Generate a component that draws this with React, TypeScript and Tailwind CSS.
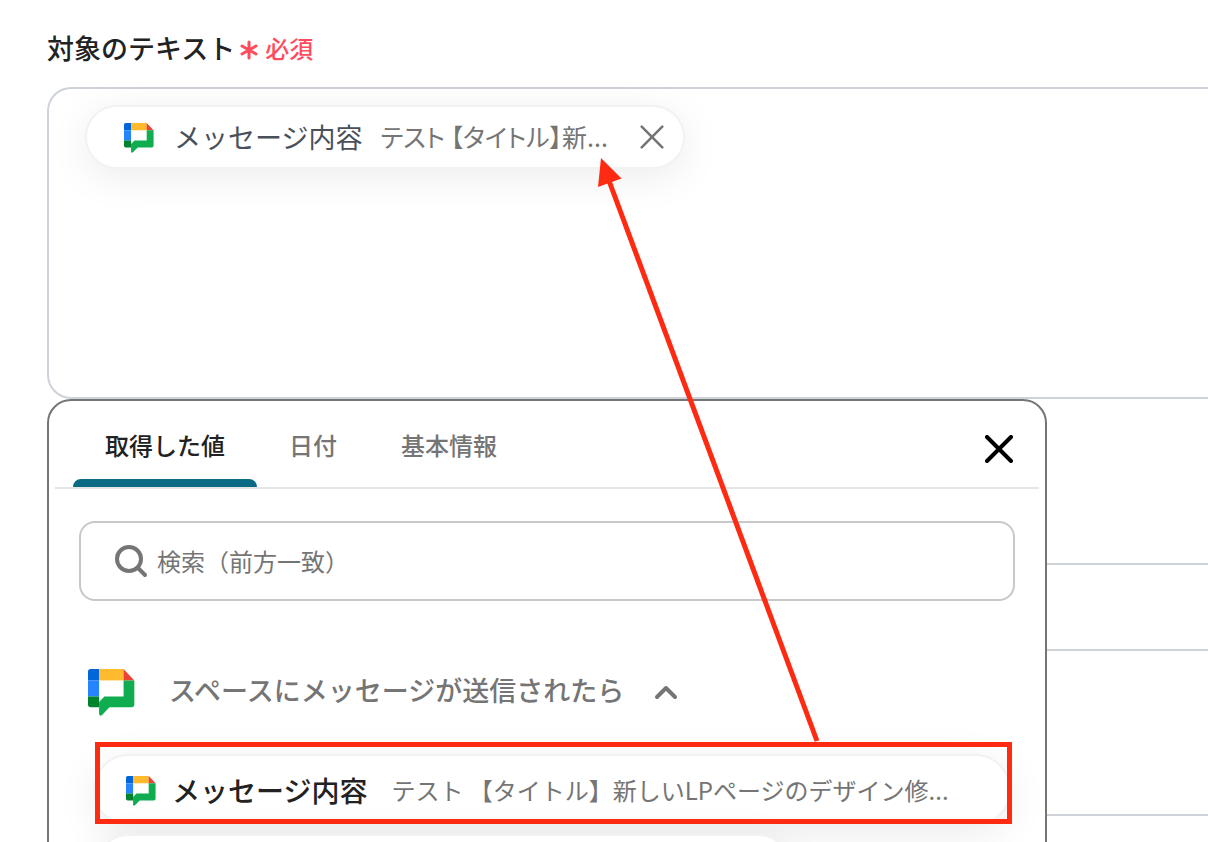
import { useState } from "react";

const tabs = ["取得した値", "日付", "基本情報"];

function ChatLogo({ className }: { className: string }) {
  return (
    <svg viewBox="0 0 140 140" className={className} aria-hidden>
      <path d="M8 0H33V34H0V8Q0 0 8 0Z" fill="#0066da" />
      <path d="M0 34H33V82H0Z" fill="#2684fc" />
      <path d="M0 82H33V114H8Q0 114 0 106Z" fill="#00832d" />
      <path d="M33 0H106V34H33Z" fill="#ffba2d" />
      <path d="M106 0L138 34H106Z" fill="#ea4335" />
      <path d="M106 34H138V106Q138 114 130 114H64L42 137Q33 143 33 132V98L49 82H106Z" fill="#0fac50" />
    </svg>
  );
}

function Cross({ className, strokeWidth }: { className: string; strokeWidth: number }) {
  return (
    <svg viewBox="0 0 28 28" fill="none" stroke="currentColor" strokeWidth={strokeWidth} strokeLinecap="round" className={className} aria-hidden>
      <path d="M2 2L26 26M26 2L2 26" />
    </svg>
  );
}

function RequiredMark() {
  return (
    <span className="flex items-center gap-[6px] text-2xl leading-10 font-medium text-[#ff4b5c]">
      <svg viewBox="0 0 20 20" fill="none" stroke="currentColor" strokeWidth="3" strokeLinecap="round" className="mt-1 size-5" aria-hidden>
        <path d="M10 2V18M3 6L17 14M17 6L3 14" />
      </svg>
      必須
    </span>
  );
}

function ValueChip() {
  return (
    <div className="flex h-16 w-[600px] items-center rounded-full border-2 border-[#f2f2f2] bg-white pr-[19px] pl-[37px] shadow-[0_8px_40px_rgba(0,0,0,0.08)]">
      <ChatLogo className="mt-[2px] size-[30px] shrink-0" />
      <span className="ml-5 text-[27px] leading-10 whitespace-nowrap text-[#495059]">メッセージ内容</span>
      <span className="ml-[18px] pb-[2px] text-[25px] leading-10 whitespace-nowrap text-[#757575] [font-feature-settings:'palt']">テスト 【タイトル】新...</span>
      <button type="button" aria-label="削除" className="ml-auto text-[#757575]">
        <Cross className="size-6" strokeWidth={3} />
      </button>
    </div>
  );
}

function ValuePicker() {
  const [active, setActive] = useState(tabs[0]);

  return (
    <div className="absolute top-full left-0 h-[600px] w-full max-w-[1000px] rounded-t-3xl border-2 border-[#757575] bg-white">
      <div className="mx-[6px] flex items-stretch border-b-2 border-[#e5e5e5] pr-[26px] pl-[18px]">
        <div className="flex" role="tablist">
          {tabs.map((tab) => (
            <button
              key={tab}
              type="button"
              role="tab"
              aria-selected={tab === active}
              onClick={() => setActive(tab)}
              className={`flex h-[86px] flex-col items-center justify-between text-2xl font-medium ${tab === active ? "text-[#222222]" : "text-[#757575]"}`}
            >
              <span className="px-8 pt-6 leading-10">{tab}</span>
              <span className={`h-2 w-full rounded-t-lg ${tab === active ? "bg-[#0b6b85]" : ""}`} />
            </button>
          ))}
        </div>
        <button type="button" aria-label="閉じる" className="mt-[10px] ml-auto text-black">
          <Cross className="size-7" strokeWidth={4} />
        </button>
      </div>

      <label className="mx-[30px] mt-8 flex h-20 items-center gap-2 rounded-2xl border-2 border-[#c8c8c8] pr-8 pl-[34px]">
        <svg viewBox="0 0 34 34" fill="none" stroke="#757575" strokeWidth="4" strokeLinecap="round" className="size-[34px] shrink-0" aria-hidden>
          <circle cx="14" cy="15" r="12" />
          <path d="M23 24L30 31" />
        </svg>
        <input
          type="text"
          aria-label="検索"
          placeholder="検索（前方一致）"
          className="w-full text-2xl text-[#222222] outline-none placeholder:text-[#757575]"
        />
      </label>

      <button type="button" className="mt-[67px] ml-[39px] flex h-12 items-center text-[#757575]">
        <ChatLogo className="size-[47px]" />
        <span className="ml-[34px] pb-1 text-[27px] leading-10 font-medium">スペースにメッセージが送信されたら</span>
        <svg viewBox="0 0 24 16" fill="none" stroke="currentColor" strokeWidth="4" strokeLinecap="round" strokeLinejoin="round" className="ml-[30px] h-4 w-6" aria-hidden>
          <path d="M3 13L12 4L21 13" />
        </svg>
      </button>

      <div className="mt-[38px] mr-[34px] ml-11 flex flex-col items-start gap-2">
        <button type="button" className="flex h-[72px] w-full items-center rounded-full border-2 border-[#f2f2f2] bg-white pl-[31px] text-left shadow-[0_8px_40px_rgba(0,0,0,0.08)]">
          <ChatLogo className="mt-[2px] size-[30px] shrink-0" />
          <span className="ml-4 text-[28px] leading-10 font-medium whitespace-nowrap text-[#222222]">メッセージ内容</span>
          <span className="ml-6 text-2xl leading-10 whitespace-nowrap text-[#757575]">テスト 【タイトル】新しいLPページのデザイン修...</span>
        </button>
        <button type="button" aria-label="値" className="h-[72px] w-[700px] rounded-full border-2 border-[#f2f2f2] bg-white shadow-[0_8px_40px_rgba(0,0,0,0.08)]" />
      </div>
    </div>
  );
}

function Callout() {
  return (
    <svg width="1208" height="842" viewBox="0 0 1208 842" className="pointer-events-none absolute top-0 left-0" aria-hidden>
      <rect x="97.5" y="744.5" width="912" height="77" fill="none" stroke="#ff2a12" strokeWidth="5" />
      <path d="M608 178L817 741" stroke="#ff2a12" strokeWidth="5" />
      <path d="M601 158L621.5 178.5L598 187Z" fill="#ff2a12" />
    </svg>
  );
}

export default function App() {
  return (
    <main className="relative h-screen overflow-hidden bg-white pt-7 pl-[47px] font-['Noto_Sans_CJK_JP',sans-serif]" lang="ja">
      <div className="mb-[19px] flex items-center gap-1">
        <h2 className="text-[27px] leading-10 font-medium text-[#222222]">対象のテキスト</h2>
        <RequiredMark />
      </div>

      <div className="relative z-10">
        <div className="min-h-[312px] rounded-l-3xl border-2 border-r-0 border-[#ced3d9] pt-4 pl-9">
          <ValueChip />
        </div>
        <ValuePicker />
      </div>

      <div className="mt-[164px] h-[88px] border-y-2 border-[#ced3d9]" />
      <div className="mt-[163px] h-[88px] border-y-2 border-[#ced3d9]" />

      <div className="absolute top-0 left-0 z-20">
        <Callout />
      </div>
    </main>
  );
}
